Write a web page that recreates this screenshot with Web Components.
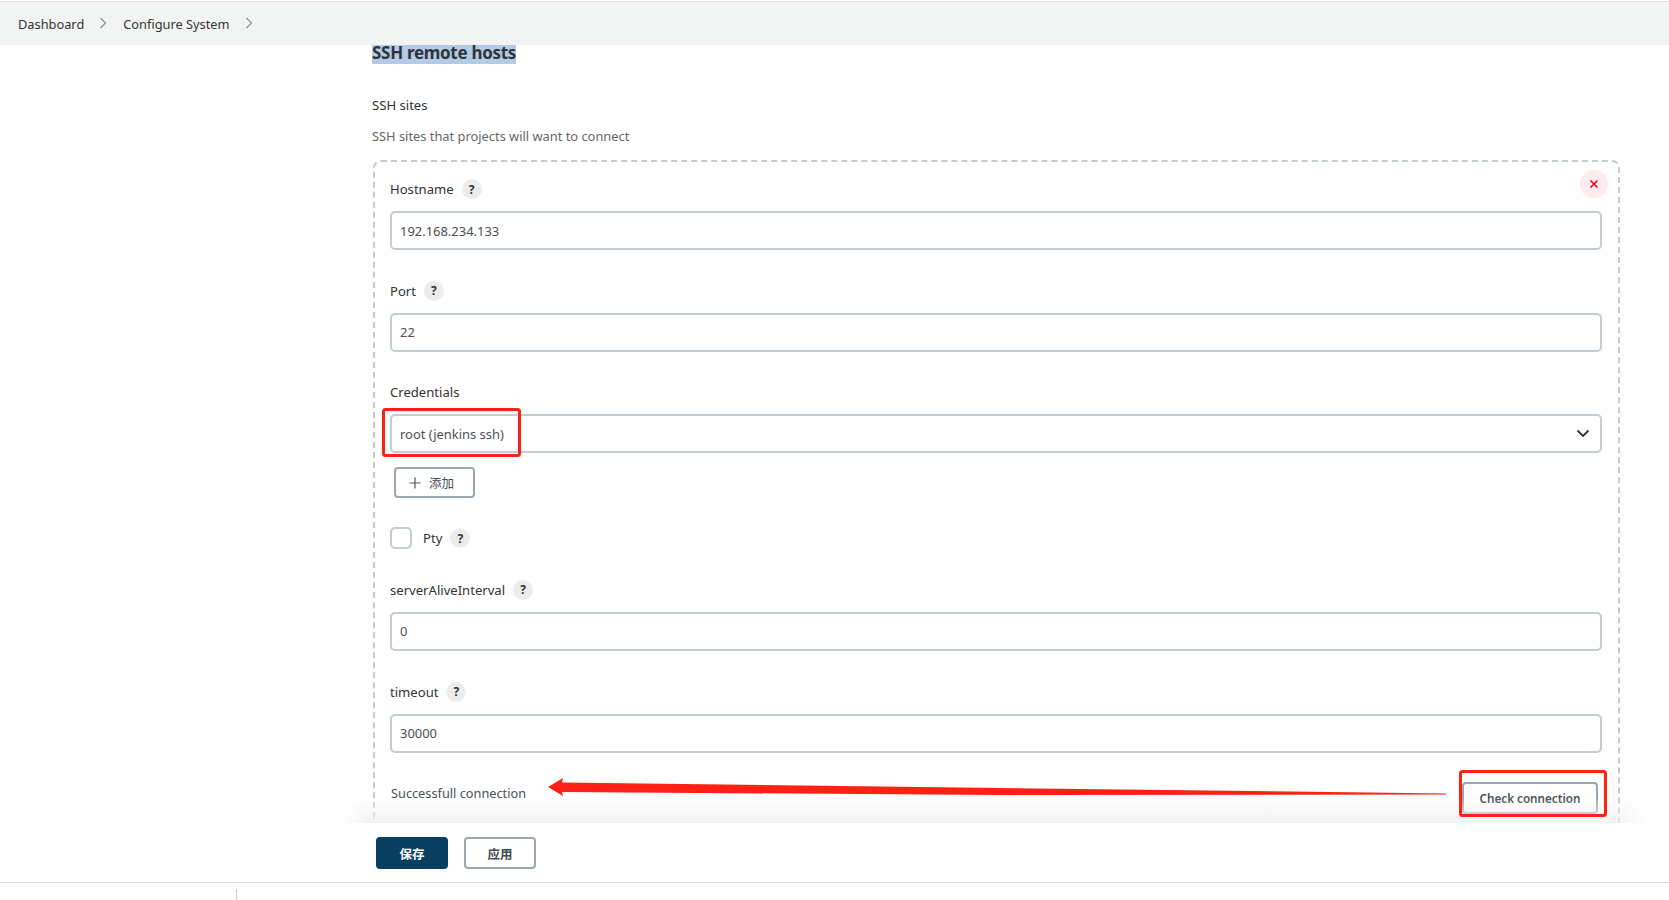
<!DOCTYPE html>
<html lang="zh"><head><meta charset="utf-8"><title>Configure System</title>
<style>
html,body{margin:0;padding:0;height:900px;overflow:hidden;background:#fff}
body{font-family:"Noto Sans","Noto Sans CJK SC",sans-serif;font-size:13px;color:#333}
</style></head><body>
<jk-app>
  <jk-topbar slot="top">
    <jk-crumb>Dashboard</jk-crumb>
    <jk-crumb>Configure System</jk-crumb>
  </jk-topbar>
  <jk-section title-text="SSH remote hosts" label="SSH sites" desc="SSH sites that projects will want to connect">
    <jk-card>
      <jk-field label="Hostname" help value="192.168.234.133"></jk-field>
      <jk-field label="Port" help value="22"></jk-field>
      <jk-field label="Credentials" value="root (jenkins ssh)" select>
        <jk-button icon style="margin:14px 0 0 4px">添加</jk-button>
      </jk-field>
      <jk-check label="Pty"></jk-check>
      <jk-field label="serverAliveInterval" help value="0"></jk-field>
      <jk-field label="timeout" help value="30000"></jk-field>
      <jk-result text="Successfull connection"><jk-button check>Check connection</jk-button></jk-result>
    </jk-card>
  </jk-section>
  <jk-footer>
    <jk-button primary>保存</jk-button>
    <jk-button wide>应用</jk-button>
  </jk-footer>
  <jk-markup></jk-markup>
</jk-app>
<script>
function def(name, html){
  customElements.define(name, class extends HTMLElement{
    connectedCallback(){
      if(this.shadowRoot) return;
      const r=this.attachShadow({mode:'open'});
      r.innerHTML=typeof html==='function'?html(this):html;
    }
  });
}
const esc=s=>String(s||'').replace(/&/g,'&amp;').replace(/</g,'&lt;');
def('jk-app',`<style>
:host{display:flex;flex-direction:column;width:1669px;height:900px;position:relative;overflow:hidden}
</style><slot name="top"></slot><slot></slot>`);
def('jk-topbar',`<style>
:host{display:flex;align-items:center;flex:none;height:43px;margin-top:1px;border-top:1px solid #e2e3e3;box-sizing:content-box;background:#f2f3f3;padding-left:18px;font-size:12.8px;color:#333}
</style><slot></slot>`);
def('jk-crumb',`<style>
:host{display:inline-flex;align-items:center}
svg{margin:-2px 16px 0 15px}
</style><slot></slot><svg width="8" height="12" viewBox="0 0 8 12" fill="none" stroke="#8a8f94" stroke-width="1.1"><path d="M1.5 1l5 5-5 5"/></svg>`);
def('jk-section',h=>`<style>
:host{display:block;flex:1;min-height:0;position:relative;padding-left:372px;padding-right:50px}
h2{display:inline-block;margin:0;font-size:17px;letter-spacing:-.3px;line-height:15px;padding-bottom:4px;padding-top:0;font-weight:700;background:#b4cbe8;color:#2f343a;vertical-align:top}
.l{margin-top:31px;line-height:20px;font-size:13.1px}
.d{margin-top:11px;line-height:20px;font-size:12.85px;color:#666;margin-bottom:14px}
</style><h2>${esc(h.getAttribute('title-text'))}</h2><div class="l">${esc(h.getAttribute('label'))}</div><div class="d">${esc(h.getAttribute('desc'))}</div><slot></slot>`);
def('jk-card',`<style>
:host{display:block;position:relative;margin-left:1px;width:1247px;box-sizing:border-box;border:2px dashed #c3ccd1;border-radius:8px;padding:17px 16px 60px 15px;height:680px}
.x{position:absolute;right:10px;top:8px;width:28px;height:28px;border-radius:50%;background:#fdebed;display:flex;align-items:center;justify-content:center}
</style><div class="x"><svg width="10" height="10" viewBox="0 0 10 10" stroke="#e6001e" stroke-width="1.6" fill="none"><path d="M1.5 1.5l7 7M8.5 1.500l-7 7"/></svg></div><slot></slot>`);
def('jk-help',`<style>
:host{display:inline-flex;align-items:center;justify-content:center;width:20px;height:20px;border-radius:50%;background:#ececec;font:700 12px "Noto Sans",sans-serif;color:#333;margin-left:8px}
</style>?`);
def('jk-field',h=>`<style>
:host{display:block;margin-bottom:30.6px}
.t{display:flex;align-items:center;height:20px;line-height:20px;font-size:13.1px;color:#333;margin-bottom:12px}
.i{box-sizing:border-box;height:39px;border:2px solid #c3ccd1;border-radius:5px;padding:0 8px;display:flex;align-items:center;justify-content:space-between;font-size:12.95px;color:#4a4f55;background:#fff}
svg{margin-right:2px}
</style><div class="t">${esc(h.getAttribute('label'))}${h.hasAttribute('help')?'<jk-help></jk-help>':''}</div><div class="i"><span>${esc(h.getAttribute('value'))}</span>${h.hasAttribute('select')?'<svg width="14" height="9" viewBox="0 0 14 9" fill="none" stroke="#333" stroke-width="1.8"><path d="M1.500 1.500L7 7l5.500-5.500"/></svg>':''}</div><slot></slot>`);
def('jk-check',h=>`<style>
:host{display:flex;align-items:center;height:22px;margin-top:-1.6px;margin-bottom:30.8px;font-size:13.1px;color:#333}
.b{box-sizing:border-box;width:22px;height:22px;border:2px solid #c3ccd1;border-radius:5px;margin-right:11px;background:#fff}
</style><span class="b"></span>${esc(h.getAttribute('label'))}<jk-help></jk-help>`);
def('jk-result',h=>`<style>
:host{display:flex;justify-content:space-between;align-items:flex-start;padding-right:4px;font-size:12.75px;color:#4a4f55}
span{line-height:20px;margin-left:1px}
::slotted(jk-button){margin-top:-1px}
</style><span>${esc(h.getAttribute('text'))}</span><slot></slot>`);
def('jk-button',h=>{
  const p=h.hasAttribute('primary'),w=h.hasAttribute('wide'),ic=h.hasAttribute('icon'),c=h.hasAttribute('check');
  return `<style>
:host{display:inline-flex;align-items:center;justify-content:center;box-sizing:border-box;height:32px;border-radius:4px;border:2px solid ${p?'#083f61':'#9aa7b0'};background:${p?'#083f61':'#fff'};color:${p?'#fff':'#444b54'};font:${p?700:600} 12.5px "Noto Sans","Noto Sans CJK SC",sans-serif;${(p||w)?'width:72px;':''}${ic?'width:81px;height:31px;font-weight:400;padding-right:6px;':''}${c?'width:136px;font-size:11.7px;':''}}
svg{margin-right:8px}
</style>${ic?'<svg width="12" height="12" viewBox="0 0 12 12" stroke="#555" stroke-width="1.2"><path d="M6 .5v11M.5 6h11"/></svg>':''}<slot></slot>`});
def('jk-footer',`<style>
:host{display:flex;flex:none;gap:16px;position:relative;height:60px;padding:14px 0 0 376px;box-sizing:border-box;background:#fff;border-bottom:1px solid #d9d9d9;margin-bottom:17px}
.g{position:absolute;left:340px;right:22px;top:-26px;height:26px;background:linear-gradient(to bottom,rgba(240,240,240,0),rgba(240,240,240,.85));-webkit-mask-image:linear-gradient(to right,transparent,#000 30px,#000 calc(100% - 30px),transparent)}
.t{position:absolute;left:236px;top:66px;width:1px;height:11px;background:#ccc}
</style><div class="g"></div><slot></slot><div class="t"></div>`);
def('jk-markup',`<style>
:host{position:absolute;inset:0;pointer-events:none}
svg{display:block}
</style><svg width="1669" height="900" viewBox="0 0 1669 900" fill="none">
<rect x="383.5" y="409.500" width="136" height="46" rx="2" stroke="#ff2113" stroke-width="3"/>
<rect x="1460.500" y="771.500" width="145" height="44" rx="2" stroke="#ff2113" stroke-width="3"/>
<path fill="#ff2113" d="M548 787L563 778L562 782.500L1000 788L1446 793.500L1446 794.500L1000 795L562 792L563 796Z"/>
</svg>`);
</script>
</body></html>
